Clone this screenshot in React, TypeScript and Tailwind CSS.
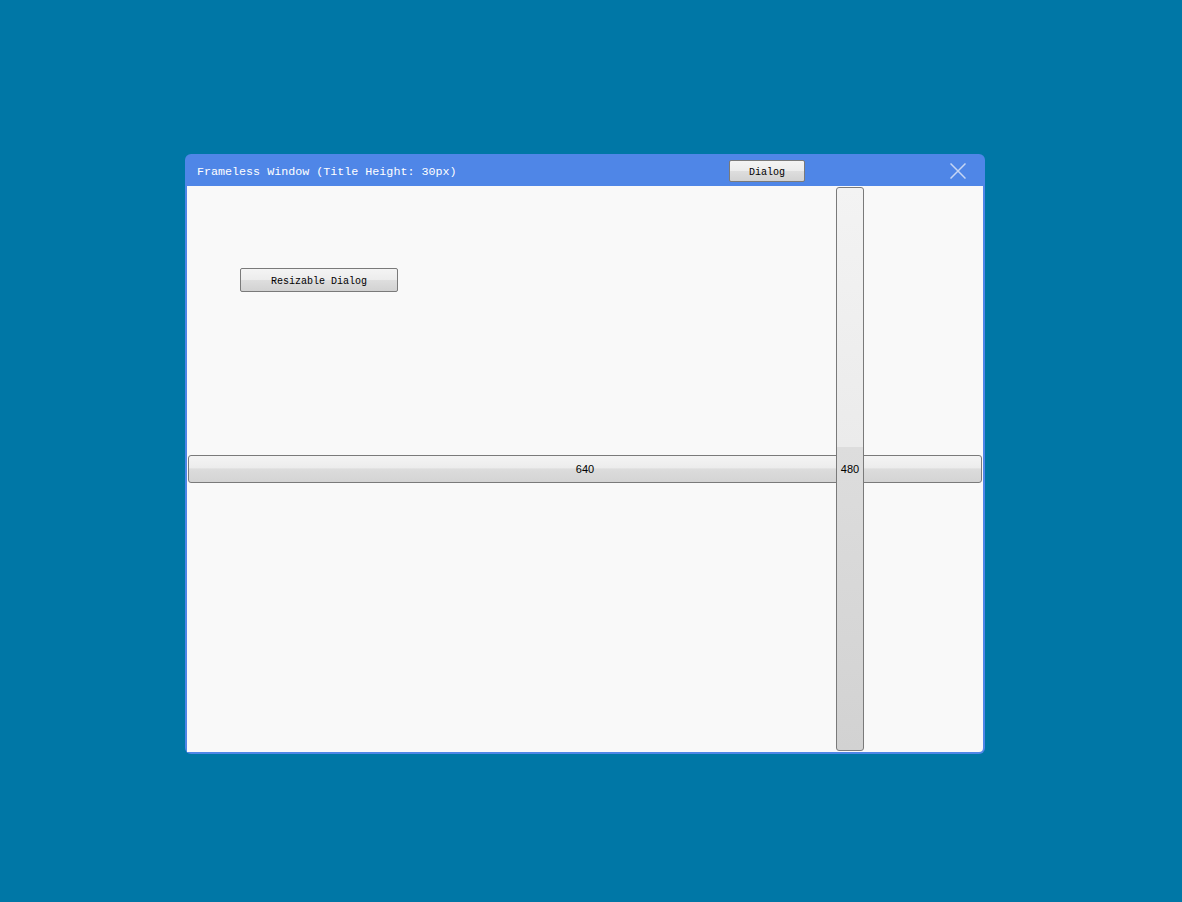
import React from "react";

const mono = { fontFamily: '"Liberation Mono", "DejaVu Sans Mono", monospace' };

export default function App() {
  return (
    <div className="relative w-[1182px] h-[902px] bg-[#0077a6] overflow-hidden">
      <div className="absolute left-[185px] top-[154px] w-[800px] h-[600px] bg-[#4f86e7] rounded-[6px] flex flex-col px-[2px] pb-[2px]">
        <div className="h-[32px] flex items-center shrink-0 relative">
          <span className="text-white text-[11.7px] ml-[10px] mt-[6px] leading-none whitespace-nowrap" style={mono}>
            Frameless Window (Title Height: 30px)
          </span>
          <button
            className="absolute left-[542px] top-[6px] w-[76px] h-[22px] pt-[3px] border border-[#7a7a7a] rounded-[2px] bg-[linear-gradient(to_bottom,#f4f4f4_0%,#ececec_50%,#dedede_50%,#d2d2d2_100%)] text-black text-[10px] leading-none flex items-center justify-center"
            style={mono}
          >
            Dialog
          </button>
          <svg className="absolute left-[763px] top-[9px]" width="16" height="16" viewBox="0 0 16 16">
            <path d="M0.5 0.5 L15.5 15.5 M15.5 0.5 L0.5 15.5" stroke="#c6d6f4" strokeWidth="1.5" fill="none" />
          </svg>
        </div>
        <div className="relative flex-1 bg-[#f9f9f9] rounded-br-[4px] pt-[82px] px-[1px]">
          <button
            className="ml-[52px] w-[158px] h-[24px] pt-[3px] border border-[#7a7a7a] rounded-[2px] bg-[linear-gradient(to_bottom,#f4f4f4_0%,#ececec_50%,#dedede_50%,#d2d2d2_100%)] text-black text-[10px] leading-none flex items-center justify-center"
            style={mono}
          >
            Resizable Dialog
          </button>
          <div
            className="mt-[163px] w-[794px] h-[28px] border border-[#7a7a7a] rounded-[3px] bg-[linear-gradient(to_bottom,#f4f4f4_0%,#ececec_45%,#dcdcdc_50%,#d4d4d4_100%)] flex items-center justify-center text-[11px] text-black"
            style={{ fontFamily: '"Liberation Sans", Arial, sans-serif' }}
          >
            640
          </div>
          <div
            className="absolute left-[649px] top-[1px] w-[28px] h-[564px] border border-[#7a7a7a] rounded-[3px] bg-[linear-gradient(to_bottom,#f3f3f3_0%,#ebebeb_46%,#dddddd_46%,#d2d2d2_100%)] flex items-center justify-center text-[11px] text-black"
            style={{ fontFamily: '"Liberation Sans", Arial, sans-serif' }}
          >
            480
          </div>
        </div>
      </div>
    </div>
  );
}
